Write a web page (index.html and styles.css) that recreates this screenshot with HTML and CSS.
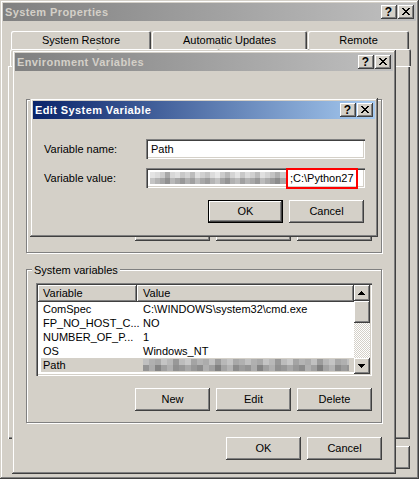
FILE: index.html
```html
<!DOCTYPE html>
<html>
<head>
<meta charset="utf-8">
<title>System Properties</title>
<link rel="stylesheet" href="styles.css">
</head>
<body>
<div class="win sysprops">
  <div class="title inactive">
    <span class="ttext">System Properties</span>
    <div class="tbtns">
      <div class="tbtn help">?</div>
      <div class="tbtn close"><svg width="8" height="7" viewBox="0 0 8 7" shape-rendering="crispEdges"><path d="M0 0h2v1H0zM6 0h2v1H6zM1 1h2v1H1zM5 1h2v1H5zM2 2h4v1H2zM3 3h2v1H3zM2 4h4v1H2zM1 5h2v1H1zM5 5h2v1H5zM0 6h2v1H0zM6 6h2v1H6z" fill="#000"/></svg></div>
    </div>
  </div>
  <div class="tabrow back">
    <div class="tab tw-restore">System Restore</div>
    <div class="tab tw-updates">Automatic Updates</div>
    <div class="tab tw-remote">Remote</div>
  </div>
  <div class="tabrow front">
    <div class="tab tw-general"></div>
    <div class="tab tw-computer"></div>
    <div class="tab tw-hardware"></div>
    <div class="tab tw-advanced"></div>
  </div>
  <div class="tabpanel"></div>
  <div class="btnrow sysbtns">
    <div class="btn"></div>
    <div class="btn"></div>
    <div class="btn"></div>
  </div>
</div>

<div class="win env">
  <div class="title inactive">
    <span class="ttext">Environment Variables</span>
    <div class="tbtns">
      <div class="tbtn help">?</div>
      <div class="tbtn close"><svg width="8" height="7" viewBox="0 0 8 7" shape-rendering="crispEdges"><path d="M0 0h2v1H0zM6 0h2v1H6zM1 1h2v1H1zM5 1h2v1H5zM2 2h4v1H2zM3 3h2v1H3zM2 4h4v1H2zM1 5h2v1H1zM5 5h2v1H5zM0 6h2v1H0zM6 6h2v1H6z" fill="#000"/></svg></div>
    </div>
  </div>
  <div class="envbody">
    <div class="group g-user">
      <div class="glabel glabel-user">User variables for user</div>
      <div class="listview"></div>
      <div class="btnrow grpbtns">
        <div class="btn"></div>
        <div class="btn"></div>
        <div class="btn"></div>
      </div>
    </div>
    <div class="group g-sys">
      <div class="glabel">System variables</div>
      <div class="listview">
        <div class="lv-main">
          <div class="lv-head">
            <div class="hcell c1">Variable</div>
            <div class="hcell c2">Value</div>
          </div>
          <div class="lv-row"><span class="c1">ComSpec</span><span class="c2">C:\WINDOWS\system32\cmd.exe</span></div>
          <div class="lv-row"><span class="c1">FP_NO_HOST_C...</span><span class="c2">NO</span></div>
          <div class="lv-row"><span class="c1">NUMBER_OF_P...</span><span class="c2">1</span></div>
          <div class="lv-row"><span class="c1">OS</span><span class="c2">Windows_NT</span></div>
          <div class="lv-row sel"><span class="c1">Path</span><span class="c2"><span class="blur blur-path"></span></span></div>
        </div>
        <div class="sbar">
          <div class="sbtn"><svg width="7" height="4" viewBox="0 0 7 4" shape-rendering="crispEdges"><path d="M3 0h1v1H3zM2 1h3v1H2zM1 2h5v1H1zM0 3h7v1H0z" fill="#000"/></svg></div>
          <div class="thumb"></div>
          <div class="track"></div>
          <div class="sbtn"><svg width="7" height="4" viewBox="0 0 7 4" shape-rendering="crispEdges"><path d="M0 0h7v1H0zM1 1h5v1H1zM2 2h3v1H2zM3 3h1v1H3z" fill="#000"/></svg></div>
        </div>
      </div>
      <div class="btnrow grpbtns">
        <div class="btn">New</div>
        <div class="btn">Edit</div>
        <div class="btn">Delete</div>
      </div>
    </div>
    <div class="btnrow envbtns">
      <div class="btn">OK</div>
      <div class="btn">Cancel</div>
    </div>
  </div>
</div>

<div class="win edit">
  <div class="title active">
    <span class="ttext">Edit System Variable</span>
    <div class="tbtns">
      <div class="tbtn help">?</div>
      <div class="tbtn close"><svg width="8" height="7" viewBox="0 0 8 7" shape-rendering="crispEdges"><path d="M0 0h2v1H0zM6 0h2v1H6zM1 1h2v1H1zM5 1h2v1H5zM2 2h4v1H2zM3 3h2v1H3zM2 4h4v1H2zM1 5h2v1H1zM5 5h2v1H5zM0 6h2v1H0zM6 6h2v1H6z" fill="#000"/></svg></div>
    </div>
  </div>
  <div class="editbody">
    <div class="frow frow-name">
      <span class="flabel">Variable name:</span>
      <div class="field"><span class="ftext">Path</span></div>
    </div>
    <div class="frow frow-value">
      <span class="flabel">Variable value:</span>
      <div class="field"><span class="blur blur-val"></span><span class="hl">;C:\Python27</span></div>
    </div>
    <div class="btnrow editbtns">
      <div class="btn def">OK</div>
      <div class="btn">Cancel</div>
    </div>
  </div>
</div>
</body>
</html>
```

FILE: styles.css
```css
* { box-sizing: border-box; margin: 0; padding: 0; }

body {
  margin: 0;
  width: 419px;
  height: 479px;
  overflow: hidden;
  position: relative;
  background: #d4d0c8;
  font-family: "Liberation Sans", Arial, sans-serif;
  font-size: 11px;
  line-height: 13px;
  color: #000;
}

/* ---------- windows ---------- */
.win {
  position: absolute;
  display: flex;
  flex-direction: column;
  padding: 3px;
  background: #d4d0c8;
  box-shadow: inset -1px -1px #404040, inset 1px 1px #d4d0c8,
              inset -2px -2px #808080, inset 2px 2px #fff;
}
.sysprops { left: 0; top: 0; width: 419px; height: 479px; }
.env { left: 12px; top: 50px; width: 384px; height: 424px; }
.edit { left: 30px; top: 98px; width: 348px; height: 139px; }

.title {
  flex: none;
  height: 18px;
  display: flex;
  align-items: center;
  padding-left: 2px;
  font-weight: bold;
  white-space: nowrap;
}
.ttext { letter-spacing: 0.4px; }
.title.inactive { background: linear-gradient(90deg, #808080, #c0c0c0); color: #d4d0c8; }
.title.active { background: linear-gradient(90deg, #0a246a, #a6caf0); color: #fff; }

.tbtns { margin-left: auto; display: flex; gap: 1px; padding-right: 2px; letter-spacing: 0; }
.tbtn {
  width: 16px;
  height: 14px;
  background: #d4d0c8;
  box-shadow: inset -1px -1px #404040, inset 1px 1px #fff, inset -2px -2px #808080;
  color: #000;
}
.help {
  font-weight: bold;
  font-size: 12px;
  line-height: 14px;
  text-align: center;
  padding-right: 1px;
}
.close { display: flex; padding: 3px 0 0 4px; }
.close svg { display: block; }

/* ---------- tabs ---------- */
.tabrow { display: flex; flex: none; }
.back { margin: 10px 0 0 8px; gap: 1px; height: 18px; }
.front { margin: 0 0 0 7px; height: 17px; }
.tab {
  height: 100%;
  display: flex;
  align-items: center;
  justify-content: center;
  border-radius: 2px 2px 0 0;
  box-shadow: inset 1px 1px #fff, inset -1px 0 #404040, inset -2px 0 #808080;
  white-space: nowrap;
}
.tw-restore { width: 140px; }
.tw-updates { width: 155px; }
.tw-remote { width: 101px; }
.tw-general { width: 88px; }
.tw-computer { width: 121px; }
.tw-hardware { width: 90px; }
.tw-advanced { width: 102px; }

.tabpanel {
  flex: none;
  margin-left: 5px;
  width: 402px;
  height: 373px;
  box-shadow: inset 1px 1px #fff, inset -1px -1px #404040, inset -2px -2px #808080;
}

/* ---------- buttons ---------- */
.btnrow { display: flex; justify-content: flex-end; gap: 6px; flex: none; }
.btn {
  width: 75px;
  height: 23px;
  display: flex;
  align-items: center;
  justify-content: center;
  background: #d4d0c8;
  box-shadow: inset -1px -1px #404040, inset 1px 1px #fff, inset -2px -2px #808080;
}
.btn.def {
  box-shadow: inset 0 0 0 1px #000, inset -2px -2px #404040, inset 2px 2px #fff, inset -3px -3px #808080;
}
.sysbtns { margin-top: 7px; padding-right: 6px; }
.grpbtns { margin-top: 12px; }
.envbtns { margin-top: 14px; }

/* ---------- environment variables ---------- */
.envbody { display: flex; flex-direction: column; padding: 0 11px; }
.group {
  display: flex;
  flex-direction: column;
  border: 1px solid #808080;
  box-shadow: inset 1px 1px #fff, 1px 1px #fff;
  padding: 0 9px 11px;
}
.g-user { margin-top: 28px; }
.g-sys { margin-top: 16px; }
.glabel {
  align-self: flex-start;
  height: 13px;
  margin: -6px 0 0 -4px;
  padding: 0 2px;
  background: #d4d0c8;
  white-space: nowrap;
}
.glabel-user { margin-top: -3px; margin-bottom: -3px; }

.listview {
  margin-top: 6px;
  height: 93px;
  padding: 2px;
  display: flex;
  background: #fff;
  box-shadow: inset 1px 1px #808080, inset 2px 2px #404040, inset -1px -1px #fff, inset -2px -2px #d4d0c8;
}
.lv-main { flex: 1; display: flex; flex-direction: column; overflow: hidden; }
.lv-head { display: flex; height: 17px; flex: none; }
.hcell {
  display: flex;
  align-items: center;
  background: #d4d0c8;
  box-shadow: inset -1px -1px #404040, inset 1px 1px #fff, inset -2px -2px #808080;
}
.lv-head .c1 { width: 99px; padding-left: 5px; }
.lv-head .c2 { flex: 1; padding-left: 6px; }
.lv-row { display: flex; height: 14px; line-height: 14px; white-space: nowrap; }
.lv-row .c1 { width: 99px; padding-left: 5px; flex: none; }
.lv-row .c2 { flex: 1; padding-left: 6px; display: flex; align-items: center; }
.lv-row.sel { background: #d4d0c8; margin-left: 3px; }
.lv-row.sel .c1 { width: 96px; padding-left: 2px; }

.sbar { width: 16px; flex: none; display: flex; flex-direction: column; }
.sbtn, .thumb {
  background: #d4d0c8;
  box-shadow: inset -1px -1px #404040, inset 1px 1px #fff, inset -2px -2px #808080;
}
.sbtn { height: 16px; flex: none; padding: 6px 0 0 4px; display: flex; align-items: flex-start; }
.sbtn svg { display: block; }
.thumb { height: 22px; flex: none; }
.track {
  flex: 1;
  background: repeating-conic-gradient(#d4d0c8 0 25%, #fff 0 50%) 0 0 / 2px 2px;
}

/* ---------- edit system variable ---------- */
.editbody { display: flex; flex-direction: column; padding: 0 10px 0 11px; }
.frow { display: flex; align-items: center; height: 20px; }
.frow-name { margin-top: 20px; }
.frow-value { margin-top: 9px; }
.flabel { width: 102px; flex: none; white-space: nowrap; }
.field {
  flex: 1;
  height: 20px;
  display: flex;
  align-items: center;
  padding-left: 4px;
  background: #fff;
  box-shadow: inset 1px 1px #808080, inset 2px 2px #404040, inset -1px -1px #fff, inset -2px -2px #d4d0c8;
  white-space: nowrap;
}
.ftext { margin-left: 1px; }
.hl {
  height: 21px;
  display: flex;
  align-items: center;
  padding: 0 2px;
  border: 2px solid #f00;
}
.editbtns { margin-top: 12px; padding-right: 1px; }

/* ---------- pixelated (blurred) values ---------- */
.blur { display: block; flex: none; }
.blur-val {
  width: 136px;
  height: 12px;
  background:
    linear-gradient(90deg, #e4e4e4 0 5px, #dcdcdc 0 10px, #cccccc 0 15px, #a8a8a8 0 20px, #d8d8d8 0 25px, #e0e0e0 0 30px, #c8c8c8 0 35px, #d4d4d4 0 40px, #bcbcbc 0 45px, #e0e0e0 0 50px, #d0d0d0 0 55px, #c4c4c4 0 60px, #dcdcdc 0 65px, #e8e8e8 0 70px, #cccccc 0 75px, #b8b8b8 0 80px, #d4d4d4 0 85px, #e4e4e4 0 90px, #c8c8c8 0 95px, #dcdcdc 0 100px, #d0d0d0 0 105px, #bcbcbc 0 110px, #e0e0e0 0 115px, #d4d4d4 0 120px, #c4c4c4 0 125px, #b0b0b0 0 130px, #cccccc 0 136px) 0 0 / 136px 6px no-repeat,
    linear-gradient(90deg, #c4c4c4 0 5px, #b4b4b4 0 10px, #a4a4a4 0 15px, #909090 0 20px, #b8b8b8 0 25px, #a8a8a8 0 30px, #989898 0 35px, #b0b0b0 0 40px, #a0a0a0 0 45px, #bcbcbc 0 50px, #a8a8a8 0 55px, #9c9c9c 0 60px, #b4b4b4 0 65px, #c4c4c4 0 70px, #a4a4a4 0 75px, #949494 0 80px, #b0b0b0 0 85px, #bcbcbc 0 90px, #a0a0a0 0 95px, #b4b4b4 0 100px, #a8a8a8 0 105px, #989898 0 110px, #bcbcbc 0 115px, #acacac 0 120px, #9c9c9c 0 125px, #8c8c8c 0 130px, #a8a8a8 0 136px) 0 6px / 136px 6px no-repeat;
}
.blur-path {
  width: 206px;
  height: 12px;
  background:
    linear-gradient(90deg, #c0c0c0 0 6px, #b0b0b0 0 12px, #a8a8a8 0 18px, #c4c4c4 0 24px, #b8b8b8 0 30px, #989898 0 36px, #bcbcbc 0 42px, #c8c8c8 0 48px, #a4a4a4 0 54px, #b4b4b4 0 60px, #acacac 0 66px, #c0c0c0 0 72px, #9c9c9c 0 78px, #b8b8b8 0 84px, #c4c4c4 0 90px, #a8a8a8 0 96px, #b0b0b0 0 102px) 0 0 / 102px 6px repeat-x,
    linear-gradient(90deg, #a8a8a8 0 6px, #989898 0 12px, #8c8c8c 0 18px, #b0b0b0 0 24px, #a0a0a0 0 30px, #808080 0 36px, #a4a4a4 0 42px, #b4b4b4 0 48px, #8c8c8c 0 54px, #9c9c9c 0 60px, #949494 0 66px, #acacac 0 72px, #848484 0 78px, #a0a0a0 0 84px, #b0b0b0 0 90px, #909090 0 96px, #989898 0 102px) 42px 6px / 102px 6px repeat-x;
}
```
